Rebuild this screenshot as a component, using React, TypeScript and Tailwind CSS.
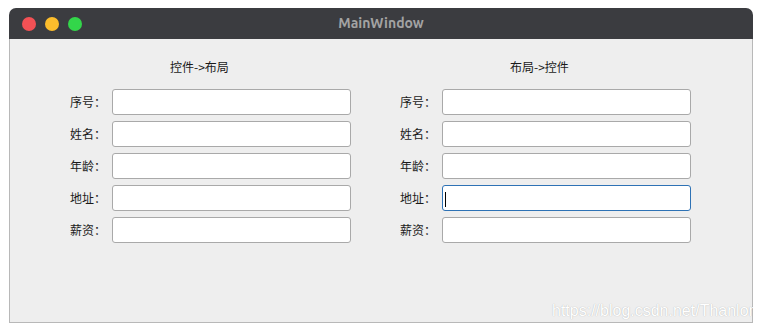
import React from "react";

const rows = ["序号：", "姓名：", "年龄：", "地址：", "薪资："];

function Field({ label, width, focused }: { label: string; width: string; focused?: boolean }) {
  return (
    <div className="flex items-center h-[26px]">
      <div className="w-[42px] text-[12px] leading-none text-[#1a1a1a]">{label}</div>
      <div
        className={
          "relative h-[26px] rounded-[3px] bg-white border " +
          width +
          (focused ? " border-[#2e72b5]" : " border-[#a9a9a9]")
        }
      >
        {focused && <div className="absolute left-[2px] top-[6px] w-[1px] h-[15px] bg-black" />}
      </div>
    </div>
  );
}

export default function App() {
  return (
    <div className="w-[763px] h-[332px] bg-white pt-[8px] pl-[9px]" style={{ fontFamily: '"Noto Sans CJK SC", "Noto Sans", sans-serif' }}>
      <div className="relative w-[744px] h-[315px] overflow-hidden">
        <div className="h-[31px] bg-[#3b3c40] rounded-t-[7px] flex items-center relative">
          <div className="flex items-center gap-[9px] pl-[13px]">
            <div className="w-[14px] h-[14px] rounded-full bg-[#f35155]" />
            <div className="w-[14px] h-[14px] rounded-full bg-[#fcbd2c]" />
            <div className="w-[14px] h-[14px] rounded-full bg-[#33d64a]" />
          </div>
          <div
            className="absolute inset-0 flex items-center justify-center text-[14px] font-bold text-[#a3a3a3]"
            style={{ fontFamily: '"Ubuntu", "Open Sans", sans-serif' }}
          >
            MainWindow
          </div>
        </div>
        <div className="h-[284px] bg-[#eeeeee] border border-t-0 border-[#b8b8b8] pt-[20px] pl-[60px] flex gap-[49px]">
          <div className="flex flex-col">
            <div className="h-[16px] pl-[100px] text-[12px] leading-[16px] text-[#1a1a1a]">控件-&gt;布局</div>
            <div className="mt-[14px] flex flex-col gap-[6px]">
              {rows.map((r) => (
                <Field key={r} label={r} width="w-[239px]" />
              ))}
            </div>
          </div>
          <div className="flex flex-col">
            <div className="h-[16px] pl-[110px] text-[12px] leading-[16px] text-[#1a1a1a]">布局-&gt;控件</div>
            <div className="mt-[14px] flex flex-col gap-[6px]">
              {rows.map((r, i) => (
                <Field key={r} label={r} width="w-[249px]" focused={i === 3} />
              ))}
            </div>
          </div>
        </div>
        <div
          className="absolute left-[543px] top-[293px] text-[16px] leading-[20px] text-white whitespace-nowrap"
          style={{ fontFamily: '"Liberation Sans", Arial, sans-serif', textShadow: "0 0 1px rgba(0,0,0,0.3)" }}
        >
          https://blog.csdn.net/Thanlon
        </div>
      </div>
    </div>
  );
}
